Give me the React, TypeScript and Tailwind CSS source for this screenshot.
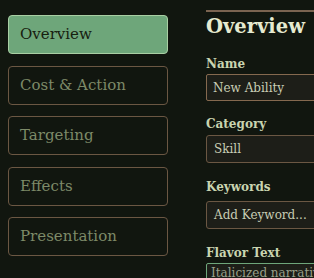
const tabs = ["Overview", "Cost & Action", "Targeting", "Effects", "Presentation"];

export default function App() {
  return (
    <div
      className="flex h-[278px] w-[314px] overflow-hidden bg-[#11160f]"
      style={{ fontFamily: '"DejaVu Serif", "Liberation Serif", serif' }}
    >
      <nav className="flex w-[177px] shrink-0 flex-col gap-[11.5px] pl-[8px] pr-[9px] pt-[15px]">
        {tabs.map((t, i) => (
          <button
            key={t}
            className={
              i === 0
                ? "h-[39px] rounded-[4px] border border-[#a9cfa4] bg-[#6ea67a] pl-[11px] text-left text-[15px] text-[#17200f]"
                : "h-[39px] rounded-[4px] border border-[#6b5743] bg-transparent pl-[11px] text-left text-[15px] text-[#7d8a68]"
            }
          >
            {t}
          </button>
        ))}
      </nav>
      <main className="flex min-w-0 flex-1 flex-col pl-[29px] pt-[10px]">
        <div className="w-full border-t-2 border-[#7a6350]" />
        <h1 className="mt-[3px] text-[19.5px] font-bold leading-[24px] text-[#e6ead0]">Overview</h1>

        <label className="mt-[17px] text-[12px] font-bold leading-4 text-[#c9d4b0]">Name</label>
        <div className="mt-[2px] flex h-[27px] w-[200px] shrink-0 items-center rounded-[2px] border border-[#85694f] bg-[#1d1e18] px-[6px] text-[12px] text-[#c8cdb4]">
          New Ability
        </div>

        <label className="mt-[15px] text-[12px] font-bold leading-4 text-[#c9d4b0]">Category</label>
        <div className="mt-[3px] flex h-[28px] w-[200px] shrink-0 items-center rounded-[3px] border border-[#6b5743] bg-[#1d1e18] px-[7px] text-[12px] text-[#c8cdb4]">
          Skill
        </div>

        <label className="mt-[16px] text-[12px] font-bold leading-4 text-[#c9d4b0]">Keywords</label>
        <div className="mt-[6px] flex h-[28px] w-[200px] shrink-0 items-center rounded-[3px] border border-[#6b5743] bg-[#1d1e18] px-[7px] text-[12px] text-[#c8cdb4]">
          Add Keyword...
        </div>

        <label className="mt-[16px] text-[12px] font-bold leading-4 text-[#c9d4b0]">Flavor Text</label>
        <div className="mt-[2px] h-[40px] w-[200px] shrink-0 rounded-[2px] border border-[#6ea67a] bg-[#1d1e18] px-[4px] pt-[1px] text-[12px] leading-4 text-[#9aa08a]">
          Italicized narrative
        </div>
      </main>
    </div>
  );
}
